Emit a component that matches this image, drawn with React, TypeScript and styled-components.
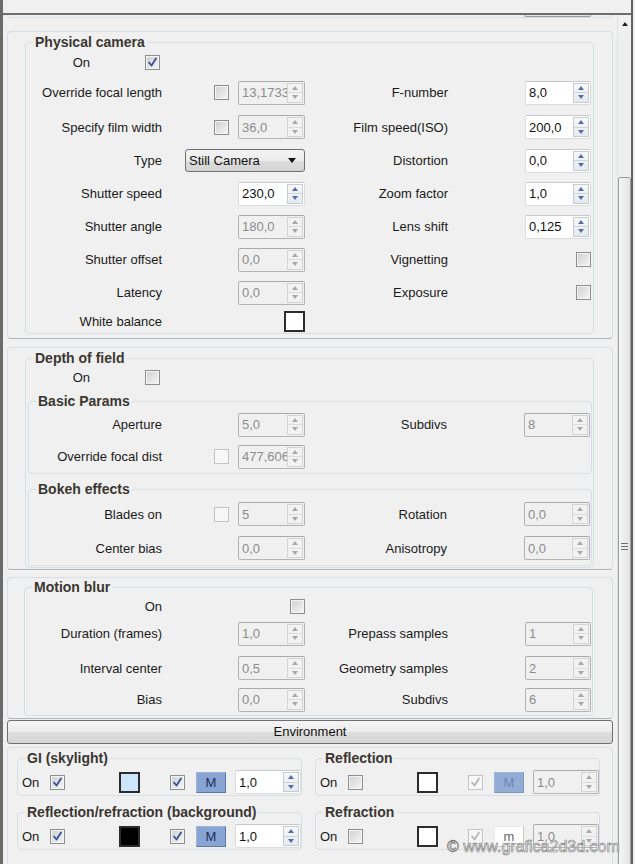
import React from "react";
import styled, { createGlobalStyle } from "styled-components";

const GlobalStyle = createGlobalStyle`
  html, body { margin: 0; padding: 0; background: #f0f0f0; }
  body {
    font-family: "Liberation Sans", Arial, sans-serif;
    font-size: 13px;
    color: #1a1a1a;
  }
`;

const Window = styled.div`
  position: relative;
  width: 633px;
  height: 864px;
  box-sizing: border-box;
  border-left: 3px solid #6b6b6b;
  border-right: 2px solid #646464;
  background: #f0f0f0;
  overflow: hidden;
  display: flex;
  flex-direction: column;
`;

const TopBar = styled.div`
  flex: none;
  height: 15px;
  box-sizing: border-box;
  border-bottom: 2px solid #6d6d6d;
`;

const Body = styled.div`
  flex: 1;
  min-height: 0;
  display: flex;
`;

const Content = styled.div`
  flex: 1;
  display: flex;
  flex-direction: column;
`;

const RolloutTail = styled.div`
  flex: none;
  margin: 0 4px;
  height: 3px;
  box-sizing: border-box;
  border: 1px solid #d5dfe5;
  border-top: none;
  border-radius: 0 0 4px 4px;
  display: flex;
  justify-content: flex-end;
`;

const ButtonStub = styled.div`
  width: 67px;
  height: 2px;
  margin-right: 21px;
  box-sizing: border-box;
  border: 1px solid #9c9c9c;
  border-top: none;
  border-radius: 0 0 3px 3px;
  background: #e4e4e4;
`;

const Rollout = styled.section<{ $top: number; $pt: number; $pb: number }>`
  flex: none;
  margin: ${(p) => p.$top}px 4px 0;
  border: 1px solid #d5dfe5;
  border-bottom-color: #aeb4b8;
  border-radius: 4px;
  padding: ${(p) => p.$pt}px 0 ${(p) => p.$pb}px;
`;

const Group = styled.fieldset<{ $ml: number; $mr: number; $mt?: number; $pt?: number; $pb?: number }>`
  margin: ${(p) => p.$mt ?? 0}px ${(p) => p.$mr}px 0 ${(p) => p.$ml}px;
  padding: ${(p) => p.$pt ?? 0}px 0 ${(p) => p.$pb ?? 0}px;
  border: 1px solid #d5dfe5;
  border-radius: 4px;
  min-width: 0;
`;

const Title = styled.legend`
  margin-left: 7px;
  padding: 0 2px;
  font-size: 14px;
  line-height: 16px;
  font-weight: bold;
  color: #3a3630;
  white-space: nowrap;
`;

const OnRow = styled.div`
  display: grid;
  grid-template-columns: 64px 15px;
  column-gap: 55px;
  align-items: center;
  height: 20px;
`;

const ParamGrid = styled.div<{ $lead: number; $mid: number; $rows: string; $mt?: number }>`
  display: grid;
  grid-template-columns: ${(p) => p.$lead}px 76px 67px ${(p) => p.$mid}px 143px;
  grid-template-rows: ${(p) => p.$rows};
  align-items: center;
  margin-top: ${(p) => p.$mt ?? 0}px;
`;

const Label = styled.span<{ $col?: number }>`
  grid-column: ${(p) => p.$col ?? 1};
  justify-self: end;
  white-space: nowrap;
`;

const Slot = styled.div<{ $col: string; $mr?: number }>`
  grid-column: ${(p) => p.$col};
  justify-self: end;
  display: flex;
  margin-right: ${(p) => p.$mr ?? 0}px;
`;

/* spinner */
const SpinBox = styled.div<{ $w: number; $off?: boolean }>`
  width: ${(p) => p.$w}px;
  height: 24px;
  box-sizing: border-box;
  display: flex;
  align-items: center;
  border: 1px solid ${(p) => (p.$off ? "#b3b3b3" : "#dcdcdc")};
  border-top-color: ${(p) => (p.$off ? "#a9a9a9" : "#c9c9c9")};
  border-radius: 2px;
  background: ${(p) => (p.$off ? "#f0f0f0" : "#ffffff")};
  color: ${(p) => (p.$off ? "#8d8d8d" : "#111111")};
`;

const SpinValue = styled.span`
  flex: 1;
  min-width: 0;
  overflow: hidden;
  white-space: nowrap;
  padding-left: 3px;
  font-size: 13px;
`;

const SpinArrows = styled.div<{ $off?: boolean }>`
  flex: none;
  width: 16px;
  height: 20px;
  margin-right: 1px;
  box-sizing: border-box;
  display: flex;
  flex-direction: column;
  border: 1px solid ${(p) => (p.$off ? "#d4d4d4" : "#c6ccd4")};
  background: ${(p) => (p.$off ? "#f2f2f2" : "linear-gradient(#f8f8f8, #e6e9ee)")};
`;

const Arrow = styled.span<{ $off?: boolean; $down?: boolean }>`
  flex: 1;
  display: flex;
  align-items: center;
  justify-content: center;
  border-top: ${(p) => (p.$down ? `1px solid ${p.$off ? "#dcdcdc" : "#cdd3db"}` : "none")};
  &::before {
    content: "";
    border-left: 3.5px solid transparent;
    border-right: 3.5px solid transparent;
    ${(p) => (p.$down ? "border-top" : "border-bottom")}: 4px solid
      ${(p) => (p.$off ? "#a8a8a8" : "#4e6fae")};
  }
`;

const Spin = ({ value, off, w = 67 }: { value: string; off?: boolean; w?: number }) => (
  <SpinBox $w={w} $off={off}>
    <SpinValue>{value}</SpinValue>
    <SpinArrows $off={off}>
      <Arrow $off={off} />
      <Arrow $off={off} $down />
    </SpinArrows>
  </SpinBox>
);

/* checkbox */
const CheckBox = styled.span<{ $off?: boolean }>`
  width: 15px;
  height: 15px;
  box-sizing: border-box;
  display: flex;
  align-items: center;
  justify-content: center;
  border: 1px solid ${(p) => (p.$off ? "#c4c4c4" : "#8e8f8f")};
  background: ${(p) => (p.$off ? "#f7f7f7" : "linear-gradient(135deg, #cfcfcf, #f6f6f6)")};
  box-shadow: ${(p) => (p.$off ? "none" : "inset 0 0 0 1px #f4f4f4")};
`;

const Check = ({ on, off }: { on?: boolean; off?: boolean }) => (
  <CheckBox $off={off}>
    {on && (
      <svg width="11" height="11" viewBox="0 0 11 11">
        <path
          d="M2 5.5 L4.5 8.5 L9 1.5"
          fill="none"
          stroke={off ? "#b4b4b4" : "#2f4f94"}
          strokeWidth="1.7"
          strokeLinecap="round"
          strokeLinejoin="round"
        />
      </svg>
    )}
  </CheckBox>
);

const Swatch = styled.span<{ $fill: string }>`
  display: block;
  width: 21px;
  height: 21px;
  box-sizing: border-box;
  border: 2px solid #2c2c2c;
  background: ${(p) => p.$fill};
`;

const Drop = styled.div`
  grid-column: 2 / 4;
  justify-self: end;
  width: 120px;
  height: 23px;
  box-sizing: border-box;
  display: flex;
  align-items: center;
  justify-content: space-between;
  padding: 0 8px 0 3px;
  border: 1px solid #707070;
  border-radius: 3px;
  background: linear-gradient(#f3f3f3 0%, #ebebeb 50%, #dddddd 51%, #d2d2d2 100%);
  color: #111;
  &::after {
    content: "";
    border-left: 4px solid transparent;
    border-right: 4px solid transparent;
    border-top: 5px solid #111;
  }
`;

const EnvButton = styled.div`
  flex: none;
  margin: 1px 4px 0;
  height: 24px;
  box-sizing: border-box;
  border: 1px solid #707070;
  border-radius: 3px;
  background: linear-gradient(#f4f4f4 0%, #ececec 50%, #dfdfdf 51%, #d6d6d6 100%);
  text-align: center;
  line-height: 22px;
  color: #111;
`;

const EnvGrid = styled.div`
  display: grid;
  grid-template-columns: 285px 285px;
  column-gap: 13px;
  row-gap: 8px;
  padding-left: 9px;
`;

const EnvRow = styled.div`
  display: grid;
  grid-template-columns: 28px 69px 51px 26px 39px 66px;
  align-items: center;
  justify-items: start;
  height: 24px;
  padding-left: 4px;
`;

const MButton = styled.span<{ $mode: "on" | "dim" | "plain" }>`
  width: 30px;
  height: 21px;
  box-sizing: border-box;
  display: flex;
  align-items: center;
  justify-content: center;
  font-size: 13px;
  border: 1px solid
    ${(p) => (p.$mode === "on" ? "#5b79ae" : p.$mode === "dim" ? "#7f99c6" : "#c9c9c9")};
  border-top-color: ${(p) => (p.$mode === "plain" ? "#ececec" : "#9fb5da")};
  border-left-color: ${(p) => (p.$mode === "plain" ? "#ececec" : "#9fb5da")};
  background: ${(p) => (p.$mode === "on" ? "#88a4d2" : p.$mode === "dim" ? "#93acd6" : "#ffffff")};
  color: ${(p) => (p.$mode === "on" ? "#1c2e58" : p.$mode === "dim" ? "#6c86b4" : "#666")};
`;

/* scrollbar */
const ScrollBar = styled.div`
  flex: none;
  width: 14px;
  box-sizing: border-box;
  border-left: 1px solid #e2e2e2;
  display: flex;
  flex-direction: column;
  background: #f0f0f0;
`;

const ScrollUp = styled.div`
  flex: none;
  height: 18px;
  display: flex;
  align-items: center;
  justify-content: center;
  &::before {
    content: "";
    border-left: 3.5px solid transparent;
    border-right: 3.5px solid transparent;
    border-bottom: 4px solid #1f1f1f;
  }
`;

const Track = styled.div`
  flex: 1;
  padding-top: 144px;
  background: #eeeeee;
`;

const Thumb = styled.div`
  height: 738px;
  box-sizing: border-box;
  border: 1px solid #9d9d9d;
  border-radius: 2px;
  background: linear-gradient(to right, #f6f6f6, #e4e4e4);
  display: flex;
  align-items: center;
  justify-content: center;
`;

const Watermark = styled.div`
  position: absolute;
  left: 444px;
  top: 838px;
  font-size: 16px;
  color: rgba(248, 248, 248, 0.9);
  -webkit-text-stroke: 0.6px #7a7a7a;
  white-space: nowrap;
  pointer-events: none;
`;

export default function App() {
  return (
    <>
      <GlobalStyle />
      <Window>
        <TopBar />
        <Body>
          <Content>
            <RolloutTail>
              <ButtonStub />
            </RolloutTail>

            <Rollout $top={13} $pt={2} $pb={4}>
              <Group $ml={17} $mr={18} $pt={2}>
                <Title>Physical camera</Title>
                <OnRow>
                  <Label>On</Label>
                  <Check on />
                </OnRow>
                <ParamGrid $lead={136} $mid={143} $rows="35px 34px repeat(5, 33px) 24px" $mt={3}>
                  <Label>Override focal length</Label>
                  <Slot $col="2" $mr={9}><Check /></Slot>
                  <Slot $col="3"><Spin value="13,17332" off /></Slot>
                  <Label $col={4}>F-number</Label>
                  <Slot $col="5"><Spin value="8,0" w={66} /></Slot>

                  <Label>Specify film width</Label>
                  <Slot $col="2" $mr={9}><Check /></Slot>
                  <Slot $col="3"><Spin value="36,0" off /></Slot>
                  <Label $col={4}>Film speed(ISO)</Label>
                  <Slot $col="5"><Spin value="200,0" w={66} /></Slot>

                  <Label>Type</Label>
                  <Drop>Still Camera</Drop>
                  <Label $col={4}>Distortion</Label>
                  <Slot $col="5"><Spin value="0,0" w={66} /></Slot>

                  <Label>Shutter speed</Label>
                  <Slot $col="3"><Spin value="230,0" /></Slot>
                  <Label $col={4}>Zoom factor</Label>
                  <Slot $col="5"><Spin value="1,0" w={66} /></Slot>

                  <Label>Shutter angle</Label>
                  <Slot $col="3"><Spin value="180,0" off /></Slot>
                  <Label $col={4}>Lens shift</Label>
                  <Slot $col="5"><Spin value="0,125" w={66} /></Slot>

                  <Label>Shutter offset</Label>
                  <Slot $col="3"><Spin value="0,0" off /></Slot>
                  <Label $col={4}>Vignetting</Label>
                  <Slot $col="5"><Check /></Slot>

                  <Label>Latency</Label>
                  <Slot $col="3"><Spin value="0,0" off /></Slot>
                  <Label $col={4}>Exposure</Label>
                  <Slot $col="5"><Check /></Slot>

                  <Label>White balance</Label>
                  <Slot $col="3"><Swatch $fill="#ffffff" /></Slot>
                </ParamGrid>
              </Group>
            </Rollout>

            <Rollout $top={8} $pt={2} $pb={1}>
              <Group $ml={17} $mr={18} $pt={1} $pb={1}>
                <Title>Depth of field</Title>
                <OnRow>
                  <Label>On</Label>
                  <Check />
                </OnRow>
                <Group $ml={2} $mr={1} $mt={6}>
                  <Title>Basic Params</Title>
                  <ParamGrid $lead={133} $mid={142} $rows="31px 33px">
                    <Label>Aperture</Label>
                    <Slot $col="3"><Spin value="5,0" off /></Slot>
                    <Label $col={4}>Subdivs</Label>
                    <Slot $col="5"><Spin value="8" off w={66} /></Slot>

                    <Label>Override focal dist</Label>
                    <Slot $col="2" $mr={9}><Check off /></Slot>
                    <Slot $col="3"><Spin value="477,6066" off /></Slot>
                  </ParamGrid>
                </Group>
                <Group $ml={2} $mr={1} $mt={7}>
                  <Title>Bokeh effects</Title>
                  <ParamGrid $lead={133} $mid={142} $rows="34px 34px">
                    <Label>Blades on</Label>
                    <Slot $col="2" $mr={9}><Check off /></Slot>
                    <Slot $col="3"><Spin value="5" off /></Slot>
                    <Label $col={4}>Rotation</Label>
                    <Slot $col="5"><Spin value="0,0" off w={66} /></Slot>

                    <Label>Center bias</Label>
                    <Slot $col="3"><Spin value="0,0" off /></Slot>
                    <Label $col={4}>Anisotropy</Label>
                    <Slot $col="5"><Spin value="0,0" off w={66} /></Slot>
                  </ParamGrid>
                </Group>
              </Group>
            </Rollout>

            <Rollout $top={7} $pt={1} $pb={2}>
              <Group $ml={16} $mr={19}>
                <Title>Motion blur</Title>
                <ParamGrid $lead={137} $mid={143} $rows="18px 37px 32px 31px" $mt={2}>
                  <Label>On</Label>
                  <Slot $col="3"><Check /></Slot>

                  <Label>Duration (frames)</Label>
                  <Slot $col="3"><Spin value="1,0" off /></Slot>
                  <Label $col={4}>Prepass samples</Label>
                  <Slot $col="5"><Spin value="1" off w={66} /></Slot>

                  <Label>Interval center</Label>
                  <Slot $col="3"><Spin value="0,5" off /></Slot>
                  <Label $col={4}>Geometry samples</Label>
                  <Slot $col="5"><Spin value="2" off w={66} /></Slot>

                  <Label>Bias</Label>
                  <Slot $col="3"><Spin value="0,0" off /></Slot>
                  <Label $col={4}>Subdivs</Label>
                  <Slot $col="5"><Spin value="6" off w={66} /></Slot>
                </ParamGrid>
              </Group>
            </Rollout>

            <EnvButton>Environment</EnvButton>

            <Rollout $top={3} $pt={2} $pb={40}>
              <EnvGrid>
                <Group $ml={0} $mr={0} $pt={4} $pb={1}>
                  <Title>GI (skylight)</Title>
                  <EnvRow>
                    <span>On</span>
                    <Check on />
                    <Swatch $fill="#cde6fb" />
                    <Check on />
                    <MButton $mode="on">M</MButton>
                    <Spin value="1,0" w={66} />
                  </EnvRow>
                </Group>
                <Group $ml={0} $mr={0} $pt={4} $pb={1}>
                  <Title>Reflection</Title>
                  <EnvRow>
                    <span>On</span>
                    <Check />
                    <Swatch $fill="#ffffff" />
                    <Check on off />
                    <MButton $mode="dim">M</MButton>
                    <Spin value="1,0" off w={66} />
                  </EnvRow>
                </Group>
                <Group $ml={0} $mr={0} $pt={4} $pb={1}>
                  <Title>Reflection/refraction (background)</Title>
                  <EnvRow>
                    <span>On</span>
                    <Check on />
                    <Swatch $fill="#000000" />
                    <Check on />
                    <MButton $mode="on">M</MButton>
                    <Spin value="1,0" w={66} />
                  </EnvRow>
                </Group>
                <Group $ml={0} $mr={0} $pt={4} $pb={1}>
                  <Title>Refraction</Title>
                  <EnvRow>
                    <span>On</span>
                    <Check />
                    <Swatch $fill="#ffffff" />
                    <Check on off />
                    <MButton $mode="plain">m</MButton>
                    <Spin value="1,0" off w={66} />
                  </EnvRow>
                </Group>
              </EnvGrid>
            </Rollout>
          </Content>
          <ScrollBar>
            <ScrollUp />
            <Track>
              <Thumb>
                <svg width="7" height="9" viewBox="0 0 7 9">
                  <path d="M0 1.5H7M0 4.5H7M0 7.5H7" stroke="#6f6f6f" strokeWidth="1" />
                </svg>
              </Thumb>
            </Track>
          </ScrollBar>
        </Body>
        <Watermark>© www.grafica2d3d.com</Watermark>
      </Window>
    </>
  );
}
